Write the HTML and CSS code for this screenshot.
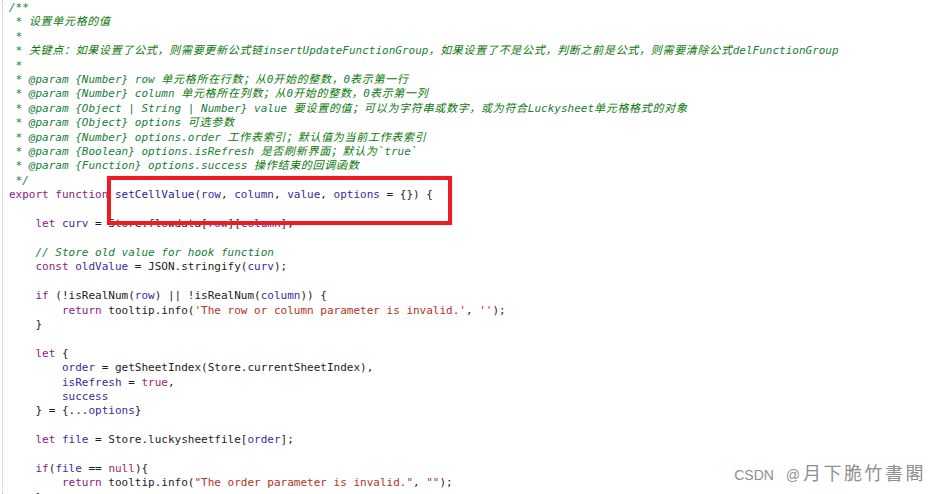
FILE: index.html
```
<!DOCTYPE html>
<html lang="zh-CN">
<head>
    <meta charset="UTF-8">
    <meta name="viewport" content="width=device-width, initial-scale=1.0">
    <title>setCellValue</title>
    <link rel="stylesheet" href="styles.css">
</head>
<body>
    <div class="editor">
<pre class="code"><span class="cm">/**
 * <span class="zh">设置单元格的值</span>
 *
 * <span class="zh">关键点：如果设置了公式，则需要更新公式链</span>insertUpdateFunctionGroup<span class="zh">，如果设置了不是公式，判断之前是公式，则需要清除公式</span>delFunctionGroup
 *
 * @param {Number} row <span class="zh">单元格所在行数；从</span>0<span class="zh">开始的整数，</span>0<span class="zh">表示第一行</span>
 * @param {Number} column <span class="zh">单元格所在列数；从</span>0<span class="zh">开始的整数，</span>0<span class="zh">表示第一列</span>
 * @param {Object | String | Number} value <span class="zh">要设置的值；可以为字符串或数字，或为符合</span>Luckysheet<span class="zh">单元格格式的对象</span>
 * @param {Object} options <span class="zh">可选参数</span>
 * @param {Number} options.order <span class="zh">工作表索引；默认值为当前工作表索引</span>
 * @param {Boolean} options.isRefresh <span class="zh">是否刷新界面；默认为</span>`true`
 * @param {Function} options.success <span class="zh">操作结束的回调函数</span>
 */</span>
<span class="kw">export function</span> <span class="fn">setCellValue</span>(<span class="vr">row</span>, <span class="vr">column</span>, <span class="vr">value</span>, <span class="vr">options</span> = {}) {

    <span class="kw">let</span> <span class="vr">curv</span> = Store.flowdata[<span class="vr">row</span>][<span class="vr">column</span>];

    <span class="cm">// Store old value for hook function</span>
    <span class="kw">const</span> <span class="vr">oldValue</span> = JSON.stringify(<span class="vr">curv</span>);

    <span class="kw">if</span> (!isRealNum(<span class="vr">row</span>) || !isRealNum(<span class="vr">column</span>)) {
        <span class="kw">return</span> tooltip.info(<span class="str">'The row or column parameter is invalid.'</span>, <span class="str">''</span>);
    }

    <span class="kw">let</span> {
        <span class="vr">order</span> = getSheetIndex(Store.currentSheetIndex),
        <span class="vr">isRefresh</span> = <span class="lit">true</span>,
        <span class="vr">success</span>
    } = {...<span class="vr">options</span>}

    <span class="kw">let</span> <span class="vr">file</span> = Store.luckysheetfile[<span class="vr">order</span>];

    <span class="kw">if</span>(<span class="vr">file</span> == <span class="lit">null</span>){
        <span class="kw">return</span> tooltip.info(<span class="str">"The order parameter is invalid."</span>, <span class="str">""</span>);
    }
</pre>
        <div class="mark"></div>
        <div class="watermark">CSDN @<span class="wm-name">月下脆竹書閣</span></div>
    </div>
</body>
</html>
```

FILE: styles.css
```
html, body {
    margin: 0;
    padding: 0;
    background: #fff;
    overflow: hidden;
}

.editor {
    position: relative;
    height: 494px;
    margin-left: 2px;
    border-left: 1px dotted #b6c6da;
    padding-left: 6px;
    overflow: hidden;
}

.code {
    margin: 1px 0 0 0;
    font-family: "DejaVu Sans Mono", "Noto Sans CJK SC", monospace;
    font-size: 11px;
    line-height: 14.4px;
    color: #1c1c1c;
    white-space: pre;
}

.cm {
    color: #16803a;
    font-style: italic;
}

/* keep the CJK runs from growing the line box */
.zh {
    font-family: "Noto Sans CJK SC", sans-serif;
    line-height: 11px;
    letter-spacing: 0.7px;
    color: #087808;
}

.kw {
    color: #8a1a80;
}

.fn {
    color: #22279a;
}

.vr {
    color: #3a2c9c;
}

.str {
    color: #b3321c;
}

.lit {
    color: #a01f6c;
}

/* red highlight drawn over the signature */
.mark {
    position: absolute;
    left: 104px;
    top: 176px;
    width: 345px;
    height: 49px;
    box-sizing: border-box;
    border: 4px solid #ec1c24;
    box-shadow: 0 0 1px rgba(236, 28, 36, 0.4);
}

.watermark {
    position: absolute;
    right: 14px;
    bottom: 9px;
    font-family: "Liberation Sans", Arial, sans-serif;
    font-size: 14px;
    line-height: 20px;
    word-spacing: 8px;
    color: #8f8f8f;
    text-shadow: 0 0 1px #fff;
}

.wm-name {
    font-family: "Noto Sans CJK SC", sans-serif;
    font-size: 18px;
    line-height: 20px;
    letter-spacing: 2.5px;
    margin-left: 3px;
}
```
